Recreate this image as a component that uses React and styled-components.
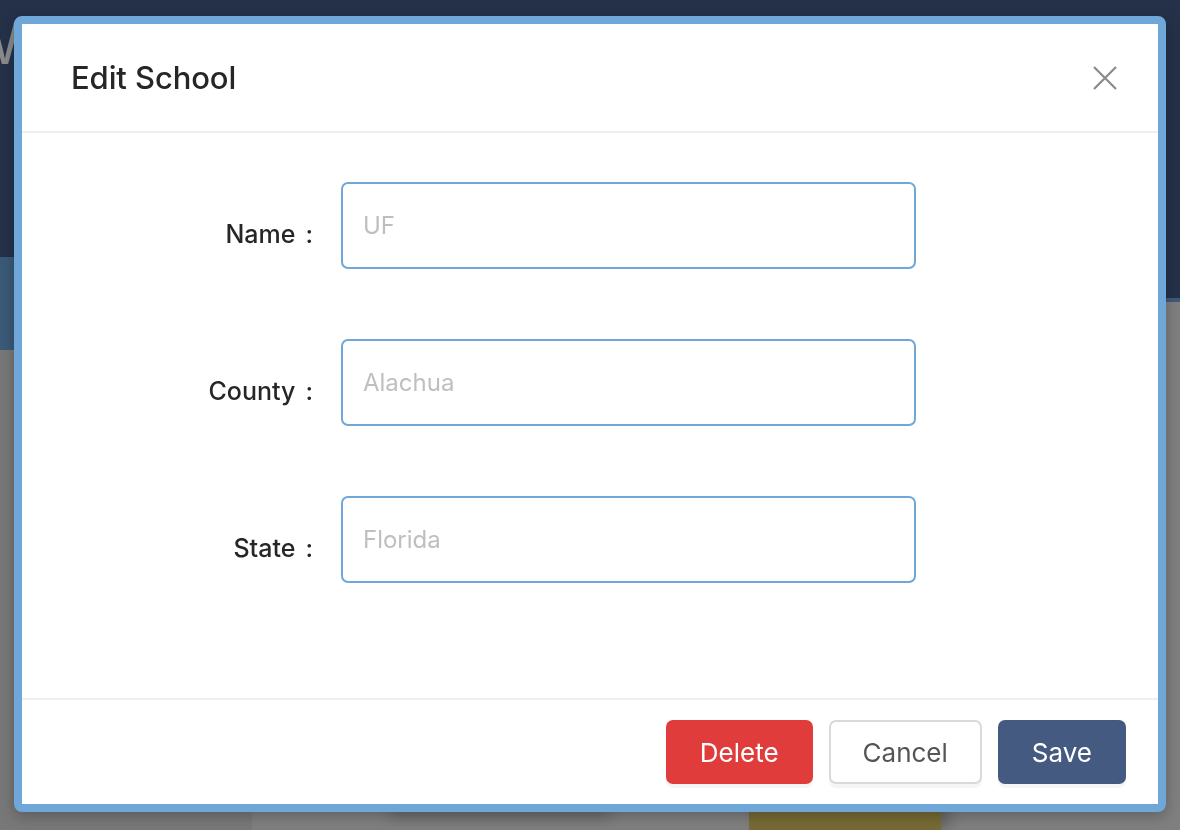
import styled, { createGlobalStyle } from 'styled-components';

const GlobalStyle = createGlobalStyle`
  html, body {
    margin: 0;
    padding: 0;
    height: 100%;
    overflow: hidden;
  }
  body {
    font-family: Inter, "Noto Sans", "Liberation Sans", sans-serif;
    background: #787878;
  }
  * { box-sizing: border-box; }
`;

const fields = [
  { label: 'Name', placeholder: 'UF' },
  { label: 'County', placeholder: 'Alachua' },
  { label: 'State', placeholder: 'Florida' },
];

const CloseIcon = () => (
  <svg width="26" height="26" viewBox="0 0 26 26" fill="none">
    <path d="M2 2 L24 24 M24 2 L2 24" stroke="#8a8a8a" strokeWidth="2.2" strokeLinecap="butt" />
  </svg>
);

const App = () => {
  return (
    <>
      <GlobalStyle />
      <Page>
        <TopBar>
          <BrandLetter>W</BrandLetter>
        </TopBar>
        <Main>
          <Sidebar>
            <SidebarHead />
          </Sidebar>
          <Content>
            <ContentHead />
            <ContentStrip />
            <Cards>
              <Card $color="#8a7a3a" $width="219px" $shadow />
              <Card $color="#776a35" $width="192px" />
            </Cards>
          </Content>
        </Main>
      </Page>

      <Overlay>
        <Modal>
          <Header>
            <Title>Edit School</Title>
            <CloseButton aria-label="Close">
              <CloseIcon />
            </CloseButton>
          </Header>
          <Body>
            {fields.map((f) => (
              <FormRow key={f.label}>
                <Label>{f.label}<Colon>:</Colon></Label>
                <Input placeholder={f.placeholder} />
              </FormRow>
            ))}
          </Body>
          <Footer>
            <Button $variant="danger">Delete</Button>
            <Button $variant="default">Cancel</Button>
            <Button $variant="primary">Save</Button>
          </Footer>
        </Modal>
      </Overlay>
    </>
  );
};

export default App;

const Page = styled.div`
  height: 100vh;
  display: flex;
  flex-direction: column;
`

const TopBar = styled.div`
  height: 257px;
  background: #243149;
  overflow: hidden;
`

const BrandLetter = styled.div`
  color: #8a8a8a;
  font-size: 58px;
  line-height: 1;
  margin: 14px 0 0 -36px;
`

const Main = styled.div`
  flex: 1;
  display: flex;
`

const Sidebar = styled.div`
  width: 252px;
  background: #787878;
`

const SidebarHead = styled.div`
  height: 93px;
  background: #3a5a78;
`

const Content = styled.div`
  flex: 1;
  background: #7f7f7f;
  display: flex;
  flex-direction: column;
`

const ContentHead = styled.div`
  height: 41px;
  background: #243149;
`

const ContentStrip = styled.div`
  height: 4px;
  background: #3e5a78;
`

const Cards = styled.div`
  margin-top: auto;
  display: flex;
  gap: 140px;
  padding-left: 138px;
  height: 28px;
`

const Card = styled.div`
  width: ${(p) => p.$width};
  background: ${(p) => p.$color};
  box-shadow: ${(p) => (p.$shadow ? '0 8px 14px rgba(0,0,0,0.35)' : '8px 0 14px rgba(0,0,0,0.2)')};
  height: ${(p) => (p.$shadow ? '6px' : '28px')};
`

const Overlay = styled.div`
  position: fixed;
  inset: 0;
  display: flex;
  padding: 16px 14px 18px 14px;
`

const Modal = styled.div`
  flex: 1;
  display: flex;
  flex-direction: column;
  background: #fff;
  border: 8px solid #6fa8d8;
  border-radius: 8px;
  box-shadow: 0 4px 14px rgba(0, 0, 0, 0.25);
`

const Header = styled.div`
  height: 109px;
  display: flex;
  align-items: center;
  justify-content: space-between;
  padding: 0 40px 0 49px;
  border-bottom: 2px solid #efefef;
`

const Title = styled.h2`
  margin: 0;
  font-size: 31px;
  font-weight: 500;
  color: #262626;
  letter-spacing: -0.1px;
`

const CloseButton = styled.button`
  border: none;
  background: none;
  padding: 0;
  display: flex;
  cursor: pointer;
`

const Body = styled.div`
  flex: 1;
  padding: 49px 0 0 0;
  display: flex;
  flex-direction: column;
  gap: 70px;
`

const FormRow = styled.div`
  display: flex;
  align-items: center;
`

const Label = styled.label`
  width: 319px;
  text-align: right;
  font-size: 25px;
  font-weight: 500;
  color: #262626;
  padding-top: 16px;
  padding-right: 28px;
  white-space: nowrap;
`

const Colon = styled.span`
  margin-left: 10px;
`

const Input = styled.input`
  width: 575px;
  height: 87px;
  border: 2px solid #6fa8d8;
  border-radius: 7px;
  padding: 0 20px;
  font-family: inherit;
  font-size: 24px;
  color: #262626;
  outline: none;

  &::placeholder {
    color: #bfbfbf;
  }
`

const variants = {
  danger: { bg: '#e03c3c', color: '#fff', border: '#e03c3c' },
  default: { bg: '#fff', color: '#555', border: '#d9d9d9' },
  primary: { bg: '#445a80', color: '#fff', border: '#445a80' },
};

const Footer = styled.div`
  height: 106px;
  border-top: 2px solid #efefef;
  display: flex;
  justify-content: flex-end;
  align-items: flex-start;
  gap: 16px;
  padding: 20px 32px 0 0;
`

const Button = styled.button`
  height: 64px;
  padding: 0 32px;
  border-radius: 7px;
  font-family: inherit;
  font-size: 26px;
  cursor: pointer;
  background: ${(p) => variants[p.$variant].bg};
  color: ${(p) => variants[p.$variant].color};
  border: 2px solid ${(p) => variants[p.$variant].border};
  box-shadow: 0 4px 0 rgba(0, 0, 0, 0.04);
`
